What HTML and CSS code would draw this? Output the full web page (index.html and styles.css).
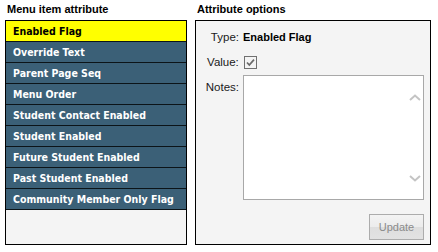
FILE: index.html
```html
<!DOCTYPE html>
<html>
<head>
<meta charset="utf-8">
<link rel="stylesheet" href="styles.css">
</head>
<body>
<div class="page">
  <section class="col col-left">
    <h2 class="heading">Menu item attribute</h2>
    <div class="list">
      <div class="row selected">Enabled Flag</div>
      <div class="row">Override Text</div>
      <div class="row">Parent Page Seq</div>
      <div class="row">Menu Order</div>
      <div class="row">Student Contact Enabled</div>
      <div class="row">Student Enabled</div>
      <div class="row">Future Student Enabled</div>
      <div class="row">Past Student Enabled</div>
      <div class="row">Community Member Only Flag</div>
    </div>
  </section>
  <section class="col col-right">
    <h2 class="heading">Attribute options</h2>
    <div class="panel">
      <div class="field f-type">
        <span class="label">Type:</span>
        <span class="value strong">Enabled Flag</span>
      </div>
      <div class="field f-value">
        <span class="label">Value:</span>
        <span class="value">
          <svg class="check" width="13" height="13" viewBox="0 0 13 13">
            <rect x="0.5" y="0.5" width="12" height="12" fill="#f4f4f4" stroke="#707070"/>
            <polyline points="3,6.5 5.3,9 10,3.6" fill="none" stroke="#6a6a6a" stroke-width="1.7"/>
          </svg>
        </span>
      </div>
      <div class="field f-notes">
        <span class="label">Notes:</span>
        <div class="value notes-wrap">
          <textarea class="notes"></textarea>
          <svg class="chev chev-up" width="12" height="7" viewBox="0 0 12 7"><polyline points="1,6 6,1.5 11,6" fill="none" stroke="#c4c4c4" stroke-width="2"/></svg>
          <svg class="chev chev-down" width="12" height="7" viewBox="0 0 12 7"><polyline points="1,1 6,5.5 11,1" fill="none" stroke="#c4c4c4" stroke-width="2"/></svg>
        </div>
      </div>
      <div class="actions">
        <button class="btn" type="button">Update</button>
      </div>
    </div>
  </section>
</div>
</body>
</html>
```

FILE: styles.css
```css
html, body {
  margin: 0;
  padding: 0;
  background: #ffffff;
}

.page {
  display: flex;
  gap: 8px;
  padding-left: 5px;
  font-family: "Liberation Sans", Arial, sans-serif;
  font-size: 11px;
  color: #000;
}

.col-left { width: 182px; }
.col-right { width: 236px; }

.heading {
  margin: 0 0 2px 0;
  padding-left: 2px;
  height: 18px;
  line-height: 18px;
  font-size: 11px;
  font-weight: bold;
}

.list {
  box-sizing: border-box;
  height: 225px;
  border: 1px solid #000;
  background: #f4f4f4;
}

.row {
  height: 20px;
  line-height: 20px;
  border-bottom: 1px solid #0c1418;
  padding-left: 7px;
  background: #3b6077;
  color: #ffffff;
  font-family: "DejaVu Sans Condensed", "DejaVu Sans", sans-serif;
  font-stretch: condensed;
  font-weight: bold;
  font-size: 10.5px;
  white-space: nowrap;
}

.row.selected {
  background: #ffff00;
  color: #000;
}

.panel {
  box-sizing: border-box;
  height: 225px;
  border: 1px solid #000;
  background: #f4f4f4;
  padding: 8px 6px 0 4px;
  display: flex;
  flex-direction: column;
}

.field {
  display: flex;
  gap: 4px;
  line-height: 16px;
}

.label {
  width: 39px;
  text-align: right;
  color: #1a1a1a;
  font-size: 11.5px;
  white-space: nowrap;
}

.value {
  width: 181px;
}

.strong { font-weight: bold; }

.f-value { margin-top: 9px; height: 16px; align-items: center; }
.f-value .value { display: flex; align-items: center; padding-left: 1px; }
.check { display: block; }

.f-notes { margin-top: 5px; }
.f-notes .label { padding-top: 4px; }

.notes-wrap {
  position: relative;
  height: 125px;
}

.notes {
  display: block;
  box-sizing: border-box;
  width: 181px;
  height: 125px;
  margin: 0;
  border: 1px solid #a8a8a8;
  background: #ffffff;
  resize: none;
  padding: 2px;
}

.chev {
  position: absolute;
  left: 166px;
}
.chev-up { top: 19px; }
.chev-down { top: 100px; }

.actions {
  margin-top: 14px;
  display: flex;
  justify-content: flex-end;
}

.btn {
  box-sizing: border-box;
  width: 55px;
  height: 26px;
  margin: 0;
  padding: 0;
  border: 1px solid #acacac;
  background: linear-gradient(#f3f3f3 0%, #ececec 50%, #dedede 51%, #e2e2e2 100%);
  color: #8b8b8b;
  font-family: "Liberation Sans", Arial, sans-serif;
  font-size: 11px;
}
```
